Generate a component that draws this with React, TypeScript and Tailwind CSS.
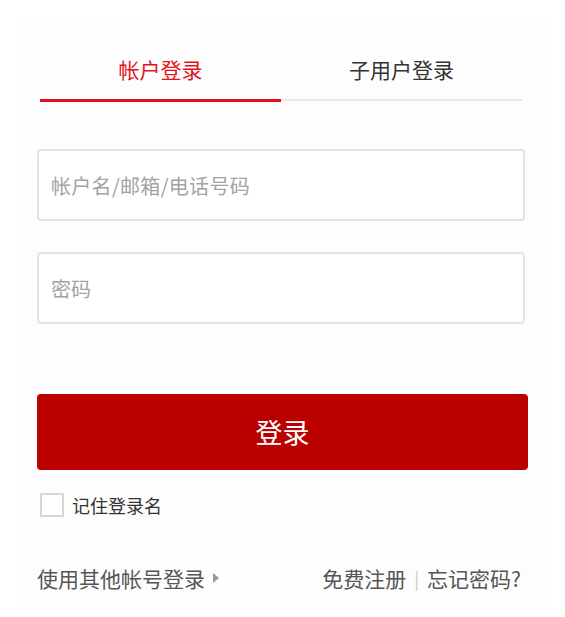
import { useState } from "react";

const font = { fontFamily: '"Noto Sans CJK SC", "Noto Sans", sans-serif' };

export default function App() {
  const [tab, setTab] = useState<"main" | "sub">("main");
  const [remember, setRemember] = useState(false);

  return (
    <div className="min-h-screen bg-white pt-[17px]" style={font}>
      <div className="ml-[17px] w-[528px] bg-[#fdfdfd] px-[20px] pb-[12px] pt-[22px]">
        {/* tabs */}
        <div className="ml-[3px] grid w-[482px] grid-cols-2 items-start">
          <button
            onClick={() => setTab("main")}
            className={
              tab === "main"
                ? "h-[63px] border-b-[3px] border-[#e4131b] text-[21px] leading-[30px] text-[#e4131b]"
                : "h-[62px] border-b-2 border-[#e8e8e8] text-[21px] leading-[30px] text-[#333]"
            }
          >
            帐户登录
          </button>
          <button
            onClick={() => setTab("sub")}
            className={
              tab === "sub"
                ? "h-[63px] border-b-[3px] border-[#e4131b] text-[21px] leading-[30px] text-[#e4131b]"
                : "h-[62px] border-b-2 border-[#e8e8e8] text-[21px] leading-[30px] text-[#333]"
            }
          >
            子用户登录
          </button>
        </div>

        <form className="flex flex-col" onSubmit={(e) => e.preventDefault()}>
          <input
            placeholder="帐户名/邮箱/电话号码"
            className="mt-[47px] h-[72px] w-[488px] rounded-[4px] border-2 border-[#e3e3e3] bg-white px-[12px] text-[20px] tracking-[0.3px] text-[#333] outline-none placeholder:text-[#a3a3a3]"
          />
          <input
            type="password"
            placeholder="密码"
            className="mt-[31px] h-[72px] w-[488px] rounded-[4px] border-2 border-[#e3e3e3] bg-white px-[12px] text-[20px] text-[#333] outline-none placeholder:text-[#a3a3a3]"
          />
          <button
            type="submit"
            className="mt-[70px] h-[76px] w-[491px] rounded-[4px] bg-[#bb0000] text-[27px] text-white"
          >
            登录
          </button>

          <label className="mt-[23px] ml-[3px] flex items-center gap-[8px] text-[18px] leading-[24px] text-[#333]">
            <span
              onClick={() => setRemember(!remember)}
              className="flex h-[24px] w-[24px] items-center justify-center border-2 border-[#d6d6d6] bg-white text-[14px] text-[#bb0000]"
            >
              {remember ? "✓" : ""}
            </span>
            记住登录名
          </label>
        </form>

        <div className="mt-[46px] flex w-[484px] items-center justify-between text-[21px] leading-[30px] text-[#555]">
          <a className="flex items-center gap-[8px]">
            使用其他帐号登录
            <svg width="6" height="10" viewBox="0 0 6 10">
              <path d="M0 0 L6 5 L0 10 Z" fill="#999" />
            </svg>
          </a>
          <div className="flex items-center">
            <a>免费注册</a>
            <span className="mx-[8px] text-[18px] text-[#ccc]">|</span>
            <a>忘记密码?</a>
          </div>
        </div>
      </div>
    </div>
  );
}
